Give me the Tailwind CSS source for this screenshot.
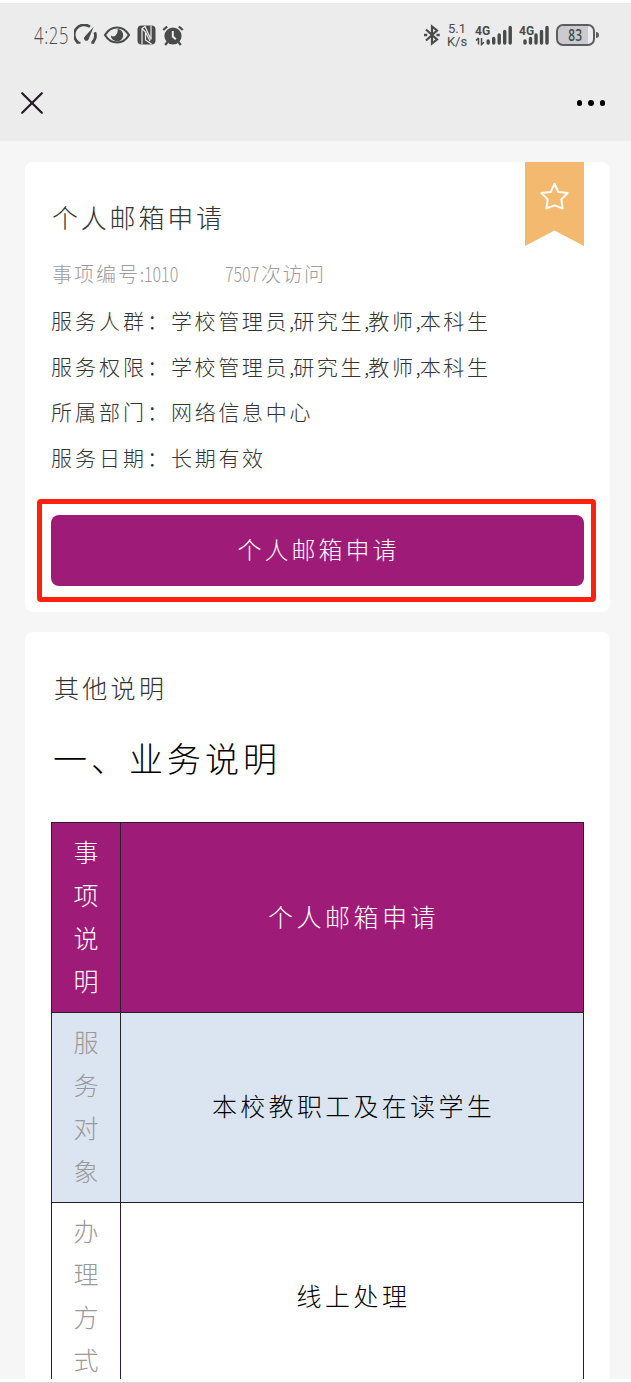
<!DOCTYPE html>
<html lang="zh-CN">
<head>
    <meta charset="UTF-8">
    <meta name="viewport" content="width=device-width, initial-scale=1.0">
    <title>个人邮箱申请</title>
    <script src="https://cdn.jsdelivr.net/npm/@tailwindcss/browser@4"></script>
</head>
<body class="bg-white font-['Noto_Sans_CJK_SC',sans-serif] font-light">
  <div class="flex flex-col w-[631px] h-[1383px] overflow-hidden border-b border-[#d9d9d9] pt-[3px] pb-[3px]">

    <!-- status bar -->
    <header class="bg-[#ececec] h-[138px] shrink-0 text-[#484b4a]">
      <div class="flex items-center h-[64px] pl-[34px]">
        <div class="w-[40px] h-[28px]"><span class="inline-block origin-left scale-x-[0.72] font-['Open_Sans',sans-serif] text-[23px] leading-[28px] tracking-[1px]">4:25</span></div>
        <svg class="w-6 h-[22px]" viewBox="0 0 24 22" fill="none" stroke="currentColor">
          <path d="M4.200 18.600A9.300 9.300 0 0 1 16 2.800" stroke-width="2.600"/>
          <path d="M20.800 8.200a10 10 0 0 1-2.400 10.400" stroke-width="2.800"/>
          <path d="M2.500 18.800h4M17.300 18.800h3" stroke-width="2"/>
          <path d="M19.700 2.800 14.700 15a2.400 2.400 0 1 1-3.800-2.500z" fill="currentColor" stroke="none"/>
        </svg>
        <svg class="w-[28px] h-[22px] ml-[5px]" viewBox="0 0 28 22" fill="none" stroke="currentColor">
          <path d="M2 11C8 1 20 1 26 11 20 21 8 21 2 11z" stroke-width="2.200"/>
          <path d="M14.500 5a6.200 6.200 0 1 1-6.700 6.300c1.200 1.600 3.600 1.400 5-.1 1.600-1.600 2.200-4 1.700-6.200z" fill="currentColor" stroke="none"/>
        </svg>
        <svg class="w-[19px] h-[20px] ml-[6px]" viewBox="0 0 19 20">
          <rect x=".5" y=".5" width="18" height="19" rx="4" fill="currentColor"/>
          <path d="M5 19.500V3.500l3-2 6 13V.5M5 3.500 8.500 7v8l6 4M8.500 7l4.500 9" fill="none" stroke="#ececec" stroke-width="1.200"/>
        </svg>
        <svg class="w-[22px] h-[21px] ml-[6px]" viewBox="0 0 22 21" fill="none" stroke="currentColor">
          <circle cx="11" cy="11" r="8.600" fill="currentColor" stroke="none"/>
          <path d="M1.200 5 5.200 1.500M16.800 1.500l4 3.500M5.500 17 3.200 20M16.500 17l2.300 3" stroke-width="2.300"/>
          <path d="M10.800 6v5.500l3 2.800" stroke="#ececec" stroke-width="2"/>
        </svg>

        <svg class="w-4 h-[22px] ml-[240px]" viewBox="0 0 16 22" fill="none" stroke="currentColor" stroke-width="2.200">
          <path d="M2 5.500 13 15.500 8 19.500V2.500L13 6.500 2 16.500"/>
          <path d="M0 11h3.200M12.500 11h3.200" stroke-width="2.600"/>
        </svg>
        <svg class="w-[24px] h-[26px] ml-[5px]" viewBox="0 0 24 26" fill="currentColor">
          <text x="12" y="11" text-anchor="middle" class="font-['Roboto',sans-serif] font-normal text-[13px]">5.1</text>
          <text x="12" y="24" text-anchor="middle" class="font-['Roboto',sans-serif] font-normal text-[13px]">K/s</text>
        </svg>
        <svg class="w-[38px] h-[22px] ml-[6px]" viewBox="0 0 38 22" fill="currentColor">
          <text x="0" y="10.500" class="font-['Roboto',sans-serif] font-bold text-[12px]">4G</text>
          <path d="M3.500 14v6.500M1 16.500l2.500-2.500M6.500 14v6.500l2.500-2.300" fill="none" stroke="currentColor" stroke-width="1.500"/>
          <g stroke="currentColor" stroke-width="3.400" stroke-linecap="round"><path d="M13.200 17v2M18.700 14.500V19M24.200 11v8M29.700 7.500V19M35.200 3.500V19"/></g>
        </svg>
        <svg class="w-[32px] h-[22px] ml-[6px]" viewBox="0 0 32 22" fill="currentColor">
          <text x="0" y="10.500" class="font-['Roboto',sans-serif] font-bold text-[12px]">4G</text>
          <g stroke="currentColor" stroke-width="3.400" stroke-linecap="round"><path d="M6 17v2M11.500 14.500V19M17 11v8M22.500 7.500V19M28 3.500V19"/></g>
        </svg>
        <div class="flex items-center ml-[5px]">
          <div class="flex justify-center items-center w-[39px] h-[22px] rounded-[7px] border-2 border-[#5c5e5e] bg-linear-to-r from-[#cbcbcf] from-85% to-[#ececec] to-85%"><span class="scale-x-75 font-['Open_Sans',sans-serif] font-semibold text-[16px]">83</span></div>
          <div class="w-[3px] h-[6px] ml-px rounded-r bg-[#5c5e5e]"></div>
        </div>
      </div>
      <div class="flex justify-between items-center h-[72px] pl-[21px] pr-[26px]">
        <svg class="size-[22px]" viewBox="0 0 22 22" fill="none" stroke="#241b26" stroke-width="2.200" stroke-linecap="round"><path d="m1.200 1.200 19.600 19.600M20.800 1.200 1.200 20.800"/></svg>
        <div class="flex gap-[6px]">
          <span class="size-[5.500px] rounded-full bg-black"></span>
          <span class="size-[5.500px] rounded-full bg-black"></span>
          <span class="size-[5.500px] rounded-full bg-black"></span>
        </div>
      </div>
    </header>

    <main class="flex flex-col gap-5 grow min-h-0 overflow-hidden bg-[#f6f6f6] pt-[21px] pl-[25px] pr-[21px]">
      <section class="relative bg-white rounded-lg h-[450px] shrink-0 text-[#333]">
        <div class="absolute top-0 right-[26px] w-[59px] h-[84px]">
          <svg class="w-full h-full" viewBox="0 0 59 84">
            <path d="M0 0h59v84L29.500 68.500 0 84z" fill="#f3ba6f"/>
            <path d="m29.500 21.800 3.900 8.300 9.200 1-6.300 6.300 1.300 9-8.100-3-8.100 3 1.300-9-6.300-6.300 9.200-1z" fill="none" stroke="#fff" stroke-width="2" stroke-linejoin="round"/>
          </svg>
        </div>
        <h2 class="pl-[27px] pt-[37px] text-[26px] leading-[36px] tracking-[2.800px] text-[#333]">个人邮箱申请</h2>
        <div class="flex pl-[27px] pt-[23px] text-[20px] leading-[32px] text-[#9c9c9c] whitespace-nowrap">
          <span class="tracking-[2px]">事项编号</span>
          <span class="w-[85px]"><span class="inline-block origin-left scale-x-[0.8]">:1010</span></span>
          <span class="w-[36px]"><span class="inline-block origin-left scale-x-[0.8]">7507</span></span>
          <span class="tracking-[1.500px]">次访问</span>
        </div>
        <div class="pl-[26px] pt-[8px] text-[21px] leading-[45.600px] tracking-[3px] whitespace-nowrap">
          <p class="flex"><span class="w-[120px]">服务人群：</span><span class="tracking-[2.600px]">学校管理员<span class="tracking-[-1px]">,</span>研究生<span class="tracking-[-1px]">,</span>教师<span class="tracking-[-1px]">,</span>本科生</span></p>
          <p class="flex"><span class="w-[120px]">服务权限：</span><span class="tracking-[2.600px]">学校管理员<span class="tracking-[-1px]">,</span>研究生<span class="tracking-[-1px]">,</span>教师<span class="tracking-[-1px]">,</span>本科生</span></p>
          <p class="flex"><span class="w-[120px]">所属部门：</span><span class="tracking-[2.700px]">网络信息中心</span></p>
          <p class="flex"><span class="w-[120px]">服务日期：</span><span class="tracking-[2.700px]">长期有效</span></p>
        </div>
        <!-- highlighted action -->
        <div class="absolute left-[12px] top-[337px] w-[559px] h-[103px] border-5 border-[#ff2010] rounded-[4px] pt-[11px] pl-[9px]">
          <button class="block w-[533px] h-[71px] bg-[#9f1b78] rounded-lg text-white text-[24px] tracking-[3px] pb-[3px] pl-[2px]">个人邮箱申请</button>
        </div>
      </section>

      <section class="bg-white rounded-t-lg grow min-h-0 px-[26px] pt-[37px] overflow-hidden">
        <h3 class="pl-[3px] text-[25px] leading-[36px] tracking-[3.300px] text-[#333]">其他说明</h3>
        <h1 class="pl-[2px] pt-[27px] text-[34px] leading-[52px] tracking-[4px] text-black">一、业务说明</h1>
        <table class="mt-[38px] w-[533px] table-fixed border-collapse text-center text-[25px] leading-[43px] text-black">
          <tr class="h-[190px] bg-[#9f1b78] text-white">
            <td class="w-[69px] border border-[#27202b] px-[20px] pb-[4px]">事项说明</td>
            <td class="border border-[#27202b] tracking-[3.500px] pl-[3px] pb-[3px]">个人邮箱申请</td>
          </tr>
          <tr class="h-[190px] bg-[#dbe5f1]">
            <td class="border border-[#27202b] px-[20px] pb-[4px] text-[#999]">服务对象</td>
            <td class="border border-[#27202b] tracking-[3.300px] pl-[3px] pb-[4px]">本校教职工及在读学生</td>
          </tr>
          <tr class="h-[190px]">
            <td class="border border-[#27202b] px-[20px] pb-[6px] text-[#999]">办理方式</td>
            <td class="border border-[#27202b] tracking-[3.500px] pl-[3px] pb-[4px]">线上处理</td>
          </tr>
        </table>
      </section>
    </main>
  </div>
</body>
</html>
